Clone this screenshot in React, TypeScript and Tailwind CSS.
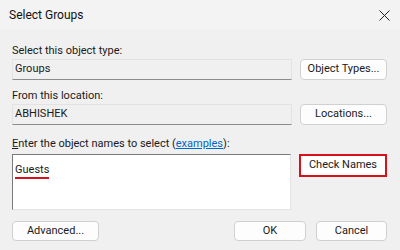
import React from "react";

function Field({ value }: { value: string }) {
  return (
    <div className="flex-1 h-[21px] flex items-center pl-[2px] bg-[#f0f0f0] border border-[#e3e3e3] border-b-[#8c8c8c] text-[11px] text-[#1a1a1a]">
      {value}
    </div>
  );
}

function Button({
  children,
  className = "",
}: {
  children: React.ReactNode;
  className?: string;
}) {
  return (
    <button
      className={
        "h-[20px] flex items-center justify-center rounded-[4px] bg-[#fdfdfd] border border-[#d0d0d0] text-[11px] text-[#1a1a1a] " +
        className
      }
    >
      {children}
    </button>
  );
}

export default function App() {
  return (
    <div
      className="w-[400px] h-[250px] bg-[#f0f0f0] flex flex-col overflow-hidden"
      style={{ fontFamily: 'Roboto, "Noto Sans", sans-serif' }}
    >
      {/* title bar */}
      <div className="h-[30px] bg-[#f3f3f3] flex items-center justify-between pl-[9px] pr-[10px]">
        <span className="text-[12px] text-[#111]">Select Groups</span>
        <svg width="11" height="11" viewBox="0 0 11 11">
          <path d="M0.5 0.5 L10.5 10.5 M10.5 0.5 L0.5 10.5" stroke="#222" strokeWidth="1" />
        </svg>
      </div>

      <div className="flex flex-col pl-[12px] pr-[13px] pt-[14px]">
        <div className="text-[11px] leading-[14px] text-[#1a1a1a]">Select this object type:</div>
        <div className="flex items-center gap-[8px] mt-[1px]">
          <Field value="Groups" />
          <Button className="w-[87px] h-[21px]">Object Types...</Button>
        </div>

        <div className="text-[11px] leading-[14px] text-[#1a1a1a] mt-[9px]">From this location:</div>
        <div className="flex items-center gap-[8px] mt-[1px]">
          <Field value="ABHISHEK" />
          <Button className="w-[87px] h-[21px]">Locations...</Button>
        </div>

        <div className="text-[11px] leading-[14px] text-[#1a1a1a] mt-[12px]">
          <span className="underline underline-offset-1">E</span>nter the object names to select (
          <span className="text-[#0066cc] underline underline-offset-1">examples</span>):
        </div>
        <div className="flex items-start gap-[8px] mt-[3px]">
          <div className="flex-1 h-[56px] bg-white border border-[#7a7a7a] border-r-[#e3e3e3] border-b-[#e3e3e3] pl-[2px] pt-[1px]">
            <span className="inline-block text-[11px] leading-[15px] text-[#1a1a1a] border-b-2 border-[#d8101c]">
              Guests
            </span>
          </div>
          <div className="w-[88px] h-[23px] flex items-center justify-center bg-white border-2 border-[#d8101c] text-[11px] text-[#1a1a1a]">
            Check Names
          </div>
        </div>

        <div className="flex items-center mt-[11px]">
          <Button className="w-[87px]">Advanced...</Button>
          <div className="flex-1" />
          <Button className="w-[72px] border-[#0067c0]">OK</Button>
          <Button className="w-[71px] ml-[10px]">Cancel</Button>
        </div>
      </div>
    </div>
  );
}
